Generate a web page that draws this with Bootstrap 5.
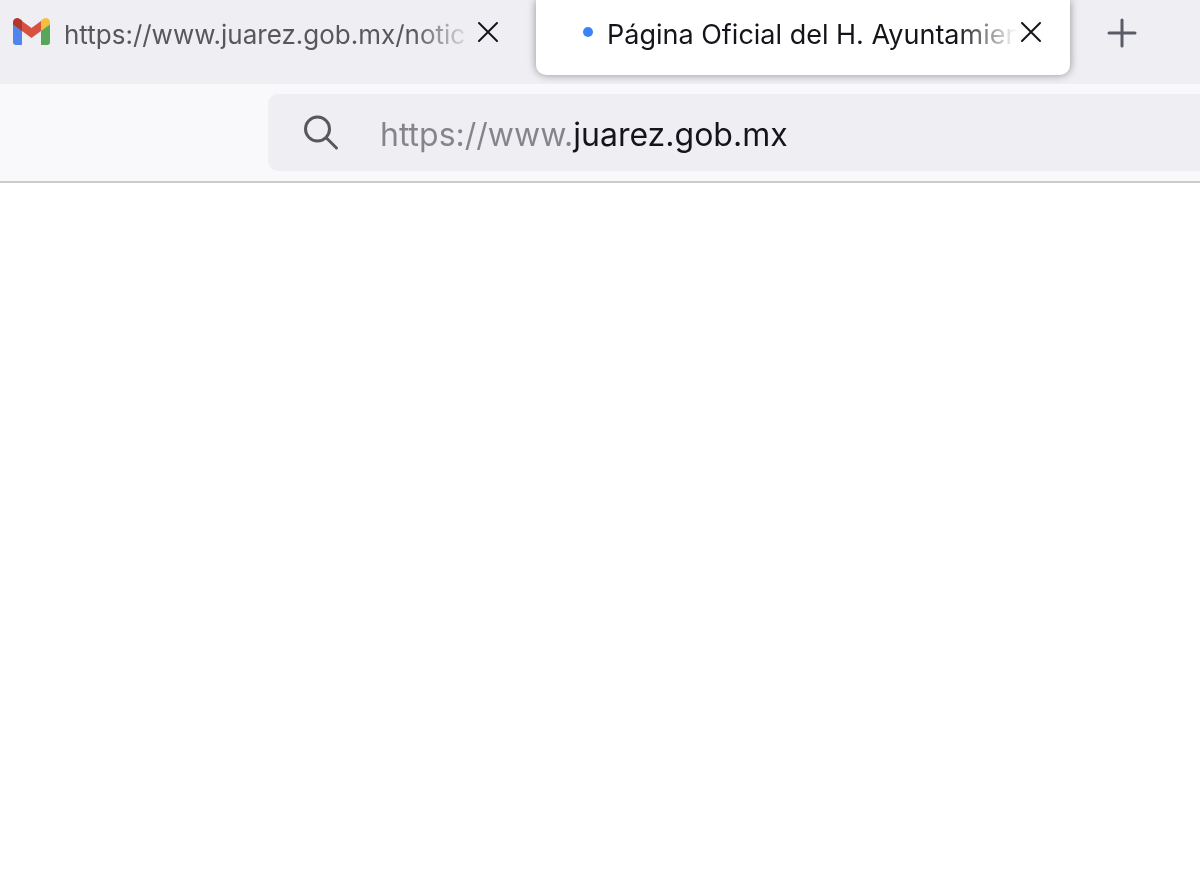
<!DOCTYPE html>
<html lang="es">
<head>
<meta charset="utf-8">
<meta name="viewport" content="width=device-width, initial-scale=1">
<title>Página Oficial del H. Ayuntamiento</title>
<link rel="stylesheet" href="https://cdn.jsdelivr.net/npm/bootstrap@5.3.0/dist/css/bootstrap.min.css">
<style>
  body { font-family: Inter, "Liberation Sans", sans-serif; color: #15141a; }
  .tab-strip { background: #efeef3; height: 84px; grid-template-columns: minmax(0, 1fr) minmax(0, 1fr) 130px; }
  .browser-tab { height: 75px; min-width: 0; padding-right: 29px; }
  .browser-tab.current { background: #fff; border-radius: 0 0 10px 10px; box-shadow: 0 0 8px rgba(0, 0, 0, .4); padding-left: 47px; margin-left: 1px; }
  .browser-tab.idle { padding: 0 37px 0 13px; }
  .tab-title { font-size: 26px; line-height: 36px; padding: 0 0 6px; color: #15141a; text-align: left; white-space: nowrap; overflow: hidden; min-width: 0;
    -webkit-mask-image: linear-gradient(to left, transparent 4px, #000 64px); mask-image: linear-gradient(to left, transparent 4px, #000 64px); }
  .current .tab-title { font-size: 27px; }
  .idle .tab-title { color: #58575c; }
  .icon-btn { line-height: 0; flex: none; padding: 0 0 12px; }
  .tab-mark { flex: none; margin-right: 14px; margin-bottom: 12px; }
  .new-tab { height: 75px; padding: 0 26px 9px 0; }
  .toolbar { background: #f9f9fb; border-bottom: 2px solid #ccc; padding: 10px 0 10px 268px; }
  .address { background: #efeef3; height: 77px; border-radius: 10px 0 0 10px; padding-left: 34px; gap: 40px; }
  .address-input { font-size: 32px; line-height: 44px; color: #15141a; outline: 0; min-width: 0; padding: 4px 0 0;
    background: linear-gradient(to right, #85848a 191px, #15141a 191px); -webkit-background-clip: text; background-clip: text; -webkit-text-fill-color: transparent; }
</style>
</head>
<body class="bg-white min-vh-100 d-flex flex-column">
<header>
  <div class="tab-strip d-grid align-items-start" role="tablist" aria-label="Pestañas">
    <div class="browser-tab idle d-flex align-items-center">
      <svg class="tab-mark" width="37" height="28" viewBox="0 0 37 28" aria-hidden="true">
        <path d="M0 6h9v21H3q-3 0-3-3z" fill="#5085ed"/>
        <path d="M28 6h9v18q0 3-3 3h-6z" fill="#58a55c"/>
        <path d="M9 3l9.500 7L28 3v10l-9.500 7L9 13z" fill="#d85140"/>
        <path d="M28 2.500l2-1.500q3-2 5.500 0Q37 2 37 4v2.500L28 13z" fill="#f1bf42"/>
        <path d="M9 2.500L7 1Q4-1 1.500 1 0 2 0 4v2.500L9 13z" fill="#b3362b"/>
      </svg>
      <button type="button" class="tab-title border-0 bg-transparent flex-grow-1" role="tab" aria-selected="false">https://www.juarez.gob.mx/notic</button>
      <button type="button" class="icon-btn border-0 bg-transparent" aria-label="Cerrar pestaña">
        <svg width="20" height="20" viewBox="0 0 20 20" fill="none" stroke="#15141a" stroke-width="2" stroke-linecap="round"><path d="M1 1l18 18M19 1L1 19"/></svg>
      </button>
    </div>
    <div class="browser-tab current d-flex align-items-center">
      <svg class="tab-mark" width="10" height="10" viewBox="0 0 10 10" aria-hidden="true"><circle cx="5" cy="5" r="5" fill="#3b84f7"/></svg>
      <button type="button" class="tab-title border-0 bg-transparent flex-grow-1" role="tab" aria-selected="true">Página Oficial del H. Ayuntamien</button>
      <button type="button" class="icon-btn border-0 bg-transparent" aria-label="Cerrar pestaña">
        <svg width="20" height="20" viewBox="0 0 20 20" fill="none" stroke="#15141a" stroke-width="2" stroke-linecap="round"><path d="M1 1l18 18M19 1L1 19"/></svg>
      </button>
    </div>
    <button type="button" class="new-tab border-0 bg-transparent d-flex align-items-center justify-content-center" aria-label="Nueva pestaña">
      <svg width="30" height="30" viewBox="0 0 30 30" fill="none" stroke="#5b5b66" stroke-width="3" stroke-linecap="round"><path d="M15 2v26M2 15h26"/></svg>
    </button>
  </div>
  <div class="toolbar">
    <div class="address d-flex align-items-center">
      <svg class="flex-shrink-0" width="38" height="38" viewBox="0 0 38 38" fill="none" stroke="#58575c" stroke-width="3" stroke-linecap="round" aria-hidden="true"><circle cx="15.500" cy="15" r="12"/><path d="M24.500 24l10 10"/></svg>
      <input class="address-input border-0 flex-grow-1" type="text" value="https://www.juarez.gob.mx" aria-label="Dirección" spellcheck="false">
    </div>
  </div>
</header>
<main class="flex-grow-1"></main>
<script src="https://cdn.jsdelivr.net/npm/bootstrap@5.3.0/dist/js/bootstrap.bundle.min.js"></script>
</body>
</html>
